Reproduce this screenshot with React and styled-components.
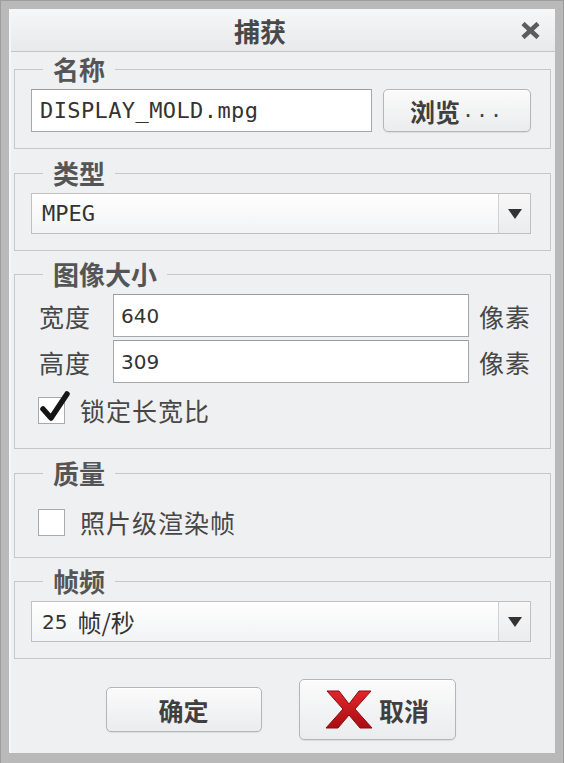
import styled, { createGlobalStyle } from "styled-components";

const GlobalStyle = createGlobalStyle`
  html, body {
    margin: 0;
    padding: 0;
    background: #b8b8b8;
  }
  * {
    box-sizing: border-box;
  }
`;

const CJK = `"Noto Sans CJK SC", "Noto Sans", sans-serif`;

const Frame = styled.div`
  width: 564px;
  height: 763px;
  padding: 8px 8px 10px 8px;
  background: #b9b9b9;
  border: 1px solid #9d9d9d;
  border-bottom: none;
`;

const Dialog = styled.div`
  width: 100%;
  height: 100%;
  background: #eef0f2;
  border-left: 2px solid #f6f7f8;
  font-family: ${CJK};
  color: #454545;
`;

const TitleBar = styled.div`
  height: 43px;
  display: flex;
  align-items: center;
  background: linear-gradient(#f6f7f8, #e8e9eb);
  border-bottom: 1px solid #c3c4c6;
`;

const Title = styled.div`
  flex: 1;
  text-align: center;
  font-size: 26px;
  font-weight: 700;
  color: #484848;
  padding-left: 2px;
`;

const CloseBox = styled.div`
  width: 48px;
  display: flex;
  justify-content: center;
  padding-right: 2px;
`;

const Body = styled.div`
  padding: 3px 4px 0 3px;
`;

const Group = styled.fieldset`
  margin: 0 0 ${p => p.$gap ?? 10}px 0;
  padding: 6px 19px ${p => p.$bottom ?? 16}px 16px;
  border: 1px solid #c6c7c9;
  min-width: 0;
`;

const Legend = styled.legend`
  margin-left: 12px;
  padding: 0 10px;
  font-size: 26px;
  line-height: 28px;
  font-weight: 700;
  color: #555;
`;

const Row = styled.div`
  display: flex;
  align-items: center;
  gap: 11px;
`;

const TextInput = styled.div`
  flex: 1;
  height: 43px;
  display: flex;
  align-items: center;
  padding-left: ${p => p.$mono ? 8 : 7}px;
  background: #fff;
  border: 1px solid #a6a7a9;
  border-top-color: #9a9b9d;
  font-family: ${p => p.$mono ? `"DejaVu Sans Mono", "Liberation Mono", monospace` : `"DejaVu Sans", sans-serif`};
  font-size: ${p => p.$mono ? 22 : 20}px;
  letter-spacing: ${p => p.$mono ? 0.4 : 0}px;
  color: #333;
`;

const Button = styled.div`
  width: ${p => p.$w}px;
  height: ${p => p.$h}px;
  display: flex;
  align-items: center;
  justify-content: center;
  gap: 6px;
  background: linear-gradient(#fbfbfb, #ebecee);
  border: 1px solid #b4b5b7;
  border-radius: 5px;
  box-shadow: inset 0 1px 0 #fff, 0 1px 1px rgba(0, 0, 0, 0.08);
  font-size: 25px;
  font-weight: 700;
  color: #3f3f3f;
`;

const Dots = styled.span`
  font-family: "DejaVu Sans Mono", monospace;
  font-weight: 400;
  font-size: 20px;
  letter-spacing: 2px;
  margin-left: -4px;
  align-self: flex-end;
  padding-bottom: 9px;
`;

const Select = styled.div`
  height: 41px;
  display: flex;
  background: linear-gradient(#ffffff, #f2f3f4);
  border: 1px solid #bfc0c2;
`;

const SelectValue = styled.div`
  flex: 1;
  display: flex;
  align-items: center;
  padding-left: 10px;
  font-family: ${p => p.$mono ? `"DejaVu Sans Mono", "Liberation Mono", monospace` : `"DejaVu Sans", ${CJK}`};
  font-size: ${p => p.$mono ? 22 : 20}px;
  color: #333;
`;

const CjkPart = styled.span`
  font-family: ${CJK};
  font-size: 24px;
  margin-left: 10px;
`;

const Arrow = styled.div`
  width: 32px;
  display: flex;
  align-items: center;
  justify-content: center;
  border-left: 1px solid #d0d1d3;
  background: linear-gradient(#f7f7f8, #ebeced);
`;

const SizeGrid = styled.div`
  display: grid;
  grid-template-columns: 72px 1fr auto;
  column-gap: 10px;
  row-gap: 3px;
  align-items: center;
`;

const Label = styled.div`
  font-size: 25px;
  letter-spacing: 1px;
  padding-left: 8px;
  color: #474747;
`;

const Unit = styled.div`
  font-size: 25px;
  letter-spacing: 1px;
  color: #474747;
`;

const CheckRow = styled.div`
  display: flex;
  align-items: center;
  gap: 15px;
  height: 34px;
  margin-top: ${p => p.$top}px;
  padding-left: 7px;
  font-size: 25px;
  letter-spacing: 1px;
  color: #474747;
`;

const Box = styled.div`
  position: relative;
  width: 27px;
  height: 27px;
  background: #fff;
  border: 1px solid #a9aaac;
`;

const Tick = styled.svg`
  position: absolute;
  left: 1px;
  top: -7px;
`;

const Footer = styled.div`
  display: flex;
  justify-content: center;
  align-items: center;
  gap: 37px;
  margin-top: 20px;
  padding-right: 4px;
`;

const Triangle = () => (
  <svg width="14" height="10" viewBox="0 0 14 10">
    <path d="M0 0 L14 0 L7 10 Z" fill="#333" />
  </svg>
);

const RedX = () => (
  <svg width="48" height="41" viewBox="0 0 48 41">
    <defs>
      <linearGradient id="rx" x1="0" y1="0" x2="0" y2="1">
        <stop offset="0" stopColor="#e0262c" />
        <stop offset="1" stopColor="#a80d12" />
      </linearGradient>
    </defs>
    <path
      d="M2 2 L14 2 L24 15 L34 2 L46 2 L30 20 L47 39 L35 39 L24 26 L13 39 L1 39 L18 20 Z"
      fill="url(#rx)"
      stroke="#8e0a0e"
      strokeWidth="1"
      strokeLinejoin="round"
    />
  </svg>
);

export default function App() {
  return (
    <>
      <GlobalStyle />
      <Frame>
        <Dialog>
          <TitleBar>
            <Title>捕获</Title>
            <CloseBox>
              <svg width="19" height="17" viewBox="0 0 19 17">
                <path d="M2 1.5 L17 15.5 M17 1.5 L2 15.5" stroke="#5c5c5c" strokeWidth="4.5" />
              </svg>
            </CloseBox>
          </TitleBar>
          <Body>
            <Group>
              <Legend>名称</Legend>
              <Row>
                <TextInput $mono>DISPLAY_MOLD.mpg</TextInput>
                <Button $w={148} $h={43}>浏览<Dots>...</Dots></Button>
              </Row>
            </Group>

            <Group $gap={9}>
              <Legend>类型</Legend>
              <Select>
                <SelectValue $mono>MPEG</SelectValue>
                <Arrow><Triangle /></Arrow>
              </Select>
            </Group>

            <Group $bottom={21}>
              <Legend>图像大小</Legend>
              <SizeGrid>
                <Label>宽度</Label>
                <TextInput>640</TextInput>
                <Unit>像素</Unit>
                <Label>高度</Label>
                <TextInput>309</TextInput>
                <Unit>像素</Unit>
              </SizeGrid>
              <CheckRow $top={10}>
                <Box>
                  <Tick width="30" height="32" viewBox="0 0 30 32">
                    <path d="M3 18 L11 27 L27 3" fill="none" stroke="#151515" strokeWidth="5.5" strokeLinecap="round" strokeLinejoin="round" />
                  </Tick>
                </Box>
                锁定长宽比
              </CheckRow>
            </Group>

            <Group $gap={9} $bottom={18}>
              <Legend>质量</Legend>
              <CheckRow $top={12}>
                <Box />
                照片级渲染帧
              </CheckRow>
            </Group>

            <Group $gap={0}>
              <Legend>帧频</Legend>
              <Select>
                <SelectValue>25<CjkPart>帧/秒</CjkPart></SelectValue>
                <Arrow><Triangle /></Arrow>
              </Select>
            </Group>

            <Footer>
              <Button $w={156} $h={45}>确定</Button>
              <Button $w={157} $h={61}><RedX />取消</Button>
            </Footer>
          </Body>
        </Dialog>
      </Frame>
    </>
  );
}
